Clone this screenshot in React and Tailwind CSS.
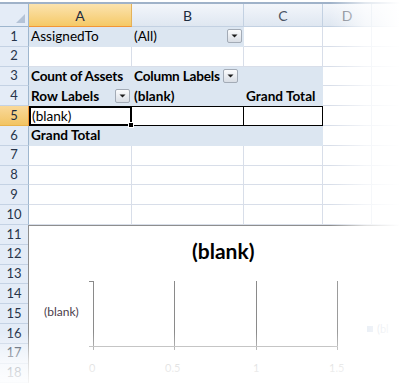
import React from "react";

const FONT = { fontFamily: "Lato, 'Open Sans', 'Liberation Sans', sans-serif" };

function Drop() {
  return (
    <span className="inline-flex items-center justify-center w-[15px] h-[14px] border border-[#a3abb6] rounded-[2px] bg-linear-to-b from-[#fbfcfd] to-[#d9dee5] shrink-0">
      <svg width="7" height="4" viewBox="0 0 7 4">
        <path d="M0.5 0.5 L6.5 0.5 L3.5 3.5 Z" fill="#1c1c1c" />
      </svg>
    </span>
  );
}

const W = ["w-[103px]", "w-[112px]", "w-[79px]", "w-[49px]", "w-[28px]"];

function RowHead({ n, sel }) {
  return (
    <div
      className={`w-[29px] shrink-0 h-full flex items-center justify-center text-[13px] border-r border-b ${
        sel
          ? "bg-linear-to-b from-[#f9d99a] to-[#f2c462] border-r-[#f29536] border-b-[#e9b34c] text-[#1b2a3d]"
          : "bg-[#e4ecf7] border-r-[#9eb6ce] border-b-[#c4d2e4] text-[#27354a]"
      }`}
    >
      {n}
    </div>
  );
}

function Cell({ w, fill, children, className = "" }) {
  return (
    <div
      className={`${w} shrink-0 h-full flex items-center px-[2px] whitespace-nowrap border-r border-b ${
        fill ? "bg-[#dce6f1] border-[#dce6f1]" : "bg-white border-[#d8dee9]"
      } ${className}`}
    >
      {children}
    </div>
  );
}

function Row({ n, cells, sel }) {
  return (
    <div className="flex h-[19.8px] text-[13.6px] text-black">
      <RowHead n={n} sel={sel} />
      {cells}
    </div>
  );
}

export default function App() {
  return (
    <div className="relative w-[400px] h-[392px] overflow-hidden bg-white" style={FONT}>
      {/* top strip */}
      <div className="h-[4px] border-b-2 border-[#9fb2c9]" />
      {/* column headers */}
      <div className="flex h-[23px] text-[14px]">
        <div className="w-[29px] shrink-0 h-full bg-[#e4ecf7] border-r border-b border-[#9eb6ce] flex items-end justify-end p-[3px]">
          <svg width="9" height="9" viewBox="0 0 9 9">
            <path d="M9 0 L9 9 L0 9 Z" fill="#b4c3d7" />
          </svg>
        </div>
        <div className={`${W[0]} shrink-0 h-full flex items-center justify-center bg-linear-to-b from-[#fbe3ae] to-[#f5c965] border-r border-b border-r-[#e4b25a] border-b-[#f29536] text-[#1d2b3e]`}>A</div>
        <div className={`${W[1]} shrink-0 h-full flex items-center justify-center bg-linear-to-b from-[#f3f6fb] to-[#dfe7f1] border-r border-b border-[#c3d1e2] text-[#1d2b3e]`}>B</div>
        <div className={`${W[2]} shrink-0 h-full flex items-center justify-center bg-linear-to-b from-[#f3f6fb] to-[#dfe7f1] border-r border-b border-[#c3d1e2] text-[#4a5564]`}>C</div>
        <div className={`${W[3]} shrink-0 h-full flex items-center justify-center bg-linear-to-b from-[#f3f6fb] to-[#dfe7f1] border-r border-b border-[#c3d1e2] text-[#6b7380]`}>D</div>
        <div className={`${W[4]} shrink-0 h-full bg-linear-to-b from-[#f3f6fb] to-[#dfe7f1] border-b border-[#c3d1e2]`} />
      </div>

      <Row
        n="1"
        cells={[
          <Cell key="a" w={W[0]} fill>AssignedTo</Cell>,
          <Cell key="b" w={W[1]} fill className="justify-between pr-[1px]">
            <span>(All)</span>
            <Drop />
          </Cell>,
          <Cell key="c" w={W[2]} />,
          <Cell key="d" w={W[3]} />,
          <Cell key="e" w={W[4]} />,
        ]}
      />
      <Row
        n="2"
        cells={[
          <Cell key="a" w={W[0]} />,
          <Cell key="b" w={W[1]} />,
          <Cell key="c" w={W[2]} />,
          <Cell key="d" w={W[3]} />,
          <Cell key="e" w={W[4]} />,
        ]}
      />
      <Row
        n="3"
        cells={[
          <Cell key="a" w={W[0]} fill className="font-bold tracking-[-0.2px]">Count of Assets</Cell>,
          <Cell key="b" w={W[1]} fill className="font-bold gap-[3px] tracking-[-0.2px]">
            <span>Column Labels</span>
            <Drop />
          </Cell>,
          <Cell key="c" w={W[2]} fill />,
          <Cell key="d" w={W[3]} />,
          <Cell key="e" w={W[4]} />,
        ]}
      />
      <Row
        n="4"
        cells={[
          <Cell key="a" w={W[0]} fill className="font-bold justify-between pr-[1px]">
            <span>Row Labels</span>
            <Drop />
          </Cell>,
          <Cell key="b" w={W[1]} fill className="font-bold">(blank)</Cell>,
          <Cell key="c" w={W[2]} fill className="font-bold">Grand Total</Cell>,
          <Cell key="d" w={W[3]} />,
          <Cell key="e" w={W[4]} />,
        ]}
      />
      <Row
        n="5"
        sel
        cells={[
          <div key="a" className={`${W[0]} shrink-0 h-full relative flex items-center pl-[1px] border-2 border-black bg-white`}>
            (blank)
            <span className="absolute right-[-4px] bottom-[-4px] w-[6px] h-[6px] bg-black border border-white" />
          </div>,
          <div key="b" className={`${W[1]} shrink-0 h-full border-t border-b border-r border-black bg-white`} />,
          <div key="c" className={`${W[2]} shrink-0 h-full border-t border-b border-r border-black bg-white`} />,
          <Cell key="d" w={W[3]} />,
          <Cell key="e" w={W[4]} />,
        ]}
      />
      <Row
        n="6"
        cells={[
          <Cell key="a" w={W[0]} fill className="font-bold">Grand Total</Cell>,
          <Cell key="b" w={W[1]} fill />,
          <Cell key="c" w={W[2]} fill />,
          <Cell key="d" w={W[3]} />,
          <Cell key="e" w={W[4]} />,
        ]}
      />
      {["7", "8", "9", "10"].map((n) => (
        <Row
          key={n}
          n={n}
          cells={[
            <Cell key="a" w={W[0]} />,
            <Cell key="b" w={W[1]} />,
            <Cell key="c" w={W[2]} />,
            <Cell key="d" w={W[3]} />,
            <Cell key="e" w={W[4]} />,
          ]}
        />
      ))}

      {/* chart region */}
      <div className="flex">
        <div className="w-[29px] shrink-0 flex flex-col">
          {["11", "12", "13", "14", "15", "16", "17", "18"].map((n) => (
            <div key={n} className="h-[19.8px]">
              <RowHead n={n} />
            </div>
          ))}
        </div>
        <div className="relative flex-1 overflow-hidden border-t border-l border-[#8e8e8e] bg-white -ml-px">
          <div className="absolute left-[163px] top-[14px] text-[21px] font-bold text-black leading-none">(blank)</div>
          <div className="absolute left-[15px] top-[80px] text-[12px] text-[#4a3c4a] leading-none">(blank)</div>
          <svg className="absolute left-0 top-0" width="371" height="160" viewBox="0 0 371 160">
            <g stroke="#8a8a8a" strokeWidth="1" fill="none">
              <path d="M64.5 55 V120" />
              <path d="M60 55.5 H64.5" />
              <path d="M145.5 55 V124" />
              <path d="M227.5 55 V124" />
              <path d="M308.5 55 V124" />
              <path d="M64.5 124 V116" />
            </g>
            <path d="M60 120.5 H309" stroke="#a8a8a8" strokeWidth="1" />
            <rect x="338" y="100" width="6" height="6" fill="#b8c8e0" />
          </svg>
          <div className="absolute top-[136px] left-[60px] text-[11px] text-[#9a9a9a] leading-none">0</div>
          <div className="absolute top-[136px] left-[136px] text-[11px] text-[#9a9a9a] leading-none">0.5</div>
          <div className="absolute top-[136px] left-[224px] text-[11px] text-[#9a9a9a] leading-none">1</div>
          <div className="absolute top-[136px] left-[300px] text-[11px] text-[#9a9a9a] leading-none">1.5</div>
          <div className="absolute top-[97px] left-[348px] text-[11px] text-[#9aa8bd] leading-none">(bl</div>
        </div>
      </div>

      {/* fades */}
      <div className="absolute top-0 right-0 w-[70px] h-full bg-linear-to-r from-white/0 via-white/70 to-white" />
      <div className="absolute left-0 bottom-0 w-full h-[60px] bg-linear-to-b from-white/0 via-white/70 to-white" />
    </div>
  );
}
